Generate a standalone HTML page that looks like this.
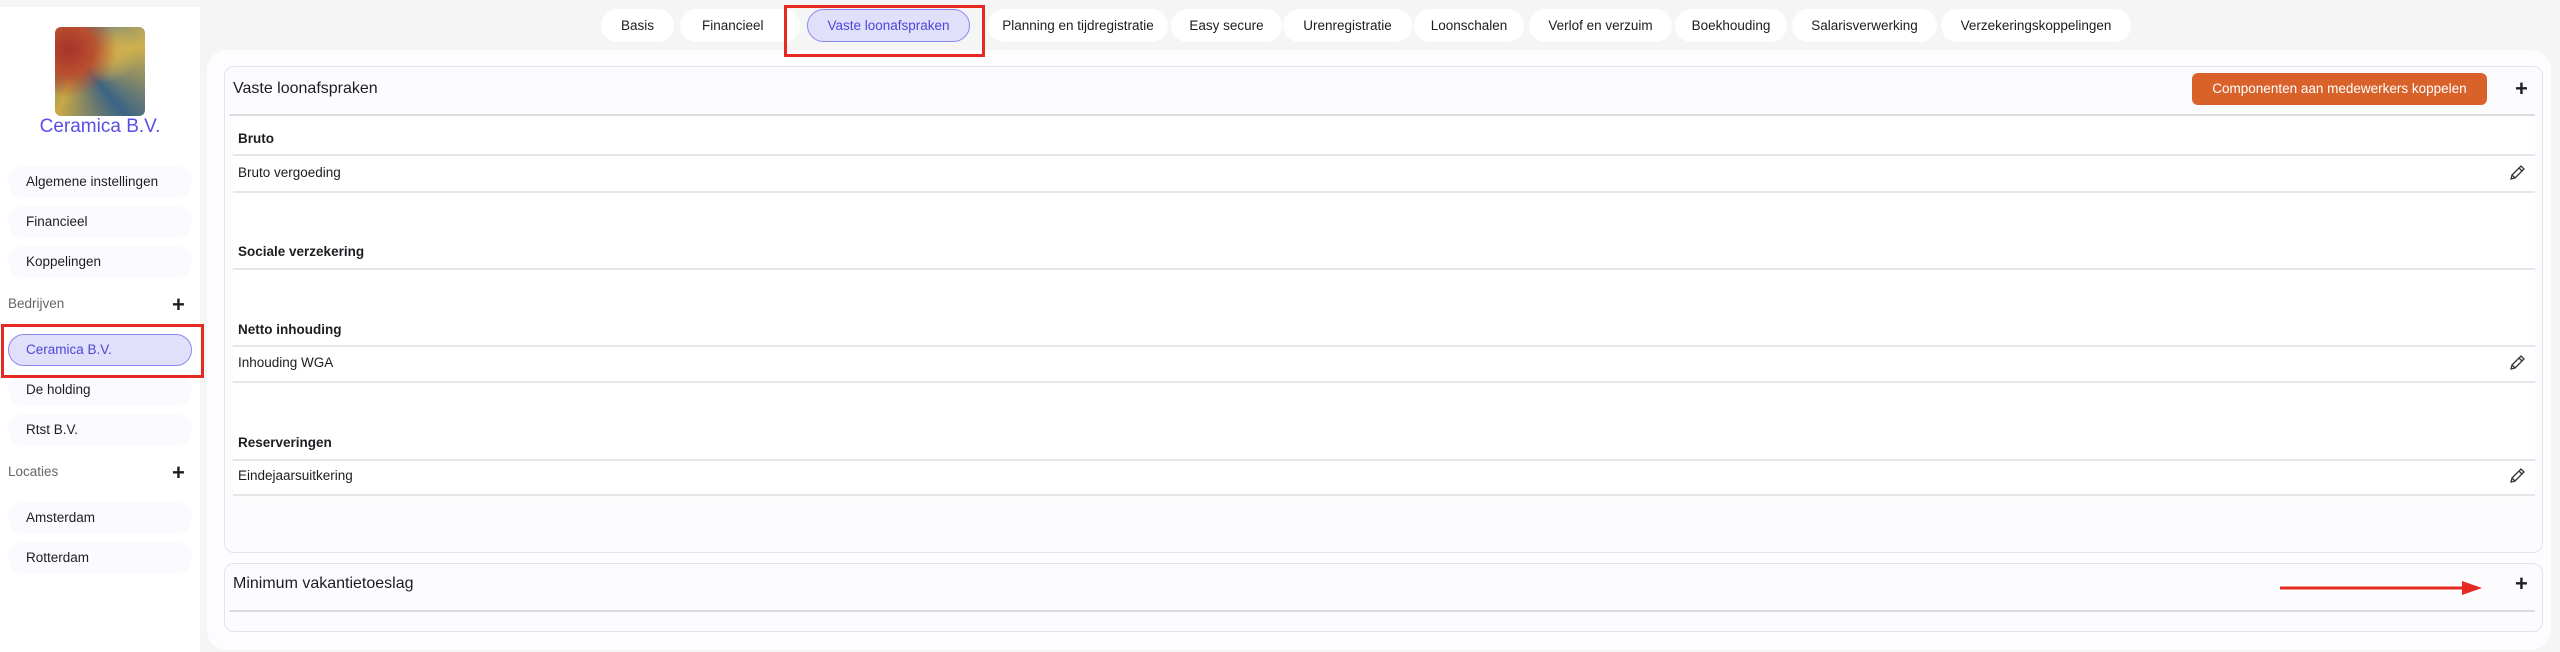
<!DOCTYPE html>
<html><head><meta charset="utf-8"><style>
*{box-sizing:border-box;margin:0;padding:0}
body{width:2560px;height:652px;background:#f6f5f6;font-family:"Liberation Sans",sans-serif;color:#1d1d22;position:relative;overflow:hidden;font-size:14px}
.abs{position:absolute}
.side{left:0;top:7px;width:200px;height:645px;background:#fff}
.logo{left:55px;top:27px;width:90px;height:89px;border-radius:6px;background:
radial-gradient(circle at 15% 25%,#a8322a 0,#b8502f 25%,transparent 48%),
radial-gradient(circle at 60% 30%,#d0b04c 0,transparent 35%),
conic-gradient(from 200deg at 25% 35%,#c9a845,#3f6a8a,#c7a444,#4d7896,#d0b04c,#3b6485,#c9a845),#4a7190}
.title{left:0;width:200px;top:116px;text-align:center;font-size:19px;color:#5a4ee6}
.pill{left:8px;width:184px;height:32px;border-radius:16px;background:#fbfaff;padding-left:18px;line-height:32px;font-size:13.5px}
.lbl{left:8px;font-size:13.5px;color:#666}
.plus{font-size:22px;font-weight:bold;line-height:1}
.tab{top:9px;height:33px;border-radius:17px;background:#fff;line-height:33px;text-align:center;font-size:13.5px;white-space:nowrap;overflow:hidden}
.panel{left:207px;top:50px;width:2344px;height:600px;background:#fdfcff;border-radius:20px}
.card{left:224px;width:2319px;border:1.5px solid #e4e2ea;border-radius:10px;background:#fcfbfe}
.line{left:233px;width:2302px;height:2px;background:#e6e6e9}
.row{left:238px;font-size:13.5px}
.b{font-weight:bold}
.pen{left:2508px;width:18px;height:18px}
.red{border:3px solid #e52a21;z-index:10}
</style></head><body>
<div class="abs side"></div>
<div class="abs logo"></div>
<div class="abs title">Ceramica B.V.</div>
<div class="abs pill" style="top:166px">Algemene instellingen</div>
<div class="abs pill" style="top:206px">Financieel</div>
<div class="abs pill" style="top:246px">Koppelingen</div>
<div class="abs lbl" style="top:296px">Bedrijven</div>
<div class="abs plus" style="left:172px;top:294px">+</div>
<div class="abs pill" style="top:334px;background:#e0e0fb;border:1px solid #8c87ef;color:#4f45d8;line-height:30px;padding-left:17px">Ceramica B.V.</div>
<div class="abs pill" style="top:374px">De holding</div>
<div class="abs pill" style="top:414px">Rtst B.V.</div>
<div class="abs lbl" style="top:464px">Locaties</div>
<div class="abs plus" style="left:172px;top:462px">+</div>
<div class="abs pill" style="top:502px">Amsterdam</div>
<div class="abs pill" style="top:542px">Rotterdam</div>

<div class="abs tab" style="left:601px;width:73px">Basis</div>
<div class="abs tab" style="left:680px;width:120px;text-align:left;padding-left:22px">Financieel</div>
<div class="abs tab" style="left:807px;width:163px;background:#e0e0fb;border:1px solid #8c87ef;color:#4f45d8;line-height:31px">Vaste loonafspraken</div>
<div class="abs tab" style="left:988px;width:180px">Planning en tijdregistratie</div>
<div class="abs tab" style="left:1171px;width:111px">Easy secure</div>
<div class="abs tab" style="left:1283px;width:129px">Urenregistratie</div>
<div class="abs tab" style="left:1414px;width:110px">Loonschalen</div>
<div class="abs tab" style="left:1529px;width:143px">Verlof en verzuim</div>
<div class="abs tab" style="left:1675px;width:112px">Boekhouding</div>
<div class="abs tab" style="left:1792px;width:145px">Salarisverwerking</div>
<div class="abs tab" style="left:1941px;width:190px">Verzekeringskoppelingen</div>

<div class="abs panel"></div>
<div class="abs card" style="top:66px;height:487px"></div>
<div class="abs" style="left:233px;top:80px;font-size:16px">Vaste loonafspraken</div>
<div class="abs" style="left:2192px;top:73px;width:295px;height:32px;border-radius:6px;background:#d9622a;color:#fff;text-align:center;line-height:32px;font-size:13.5px">Componenten aan medewerkers koppelen</div>
<div class="abs plus" style="left:2515px;top:78px">+</div>
<div class="abs line" style="left:229px;width:2306px;top:114px;background:#dcdbe0"></div>

<div class="abs" style="left:233px;top:117px;width:2302px;height:380px;background:#fff"></div>
<div class="abs row b" style="top:131px">Bruto</div>
<div class="abs line" style="top:154px"></div>
<div class="abs row" style="top:165px">Bruto vergoeding</div>
<div class="abs line" style="top:191px"></div>
<div class="abs row b" style="top:244px">Sociale verzekering</div>
<div class="abs line" style="top:268px"></div>
<div class="abs row b" style="top:322px">Netto inhouding</div>
<div class="abs line" style="top:345px"></div>
<div class="abs row" style="top:355px">Inhouding WGA</div>
<div class="abs line" style="top:381px"></div>
<div class="abs row b" style="top:435px">Reserveringen</div>
<div class="abs line" style="top:459px"></div>
<div class="abs row" style="top:468px">Eindejaarsuitkering</div>
<div class="abs line" style="top:494px"></div>

<svg class="abs pen" style="top:164px" viewBox="0 0 18 18" fill="none" stroke="#333" stroke-width="1.3"><path d="M3 15l1-4 9-9 3 3-9 9z M4 11l3 3 M11 4l3 3"/></svg>
<svg class="abs pen" style="top:354px" viewBox="0 0 18 18" fill="none" stroke="#333" stroke-width="1.3"><path d="M3 15l1-4 9-9 3 3-9 9z M4 11l3 3 M11 4l3 3"/></svg>
<svg class="abs pen" style="top:467px" viewBox="0 0 18 18" fill="none" stroke="#333" stroke-width="1.3"><path d="M3 15l1-4 9-9 3 3-9 9z M4 11l3 3 M11 4l3 3"/></svg>

<div class="abs card" style="top:563px;height:69px"></div>
<div class="abs" style="left:233px;top:575px;font-size:16px">Minimum vakantietoeslag</div>
<div class="abs line" style="left:229px;width:2306px;top:610px;background:#dcdbe0"></div>
<div class="abs plus" style="left:2515px;top:573px">+</div>
<svg class="abs" style="left:2278px;top:580px" width="206" height="16" viewBox="0 0 206 16"><path d="M2 8H186" stroke="#e52a21" stroke-width="3"/><path d="M184 1L204 8L184 15z" fill="#e52a21"/></svg>

<div class="abs red" style="left:1px;top:324px;width:203px;height:54px"></div>
<div class="abs red" style="left:784px;top:5px;width:201px;height:52px"></div>
</body></html>
